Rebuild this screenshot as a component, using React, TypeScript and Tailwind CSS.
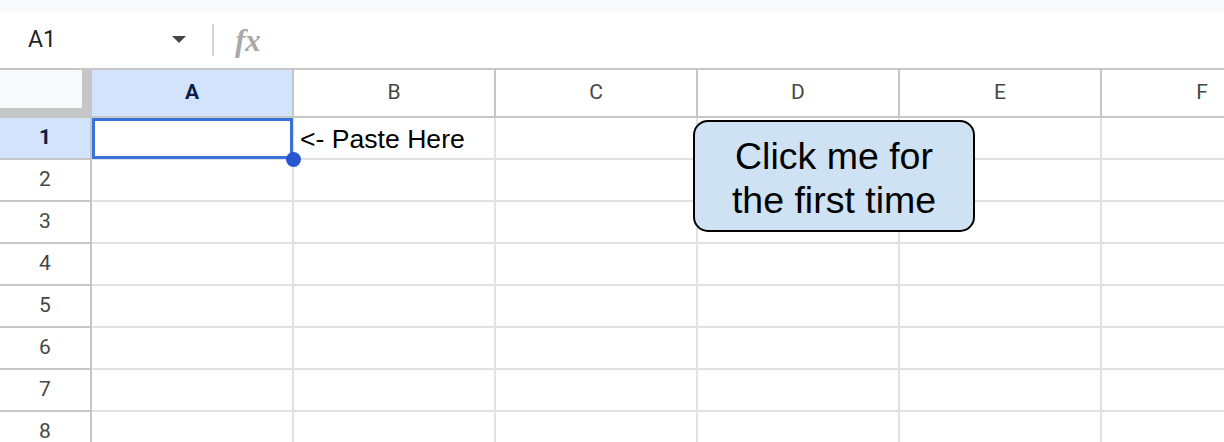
import React from "react";

const columns = ["A", "B", "C", "D", "E", "F"];
const rows = [1, 2, 3, 4, 5, 6, 7, 8];

function ColumnHeader({ label }: { label: string }) {
	const active = label === "A";
	return (
		<div
			className={`w-[202px] shrink-0 h-full border-r-2 border-b-2 border-[#c4c7c5] flex items-center justify-center text-[21px] ${
				active ? "bg-[#d3e3fd] text-[#0b1d45] font-bold" : "bg-white text-[#444746]"
			}`}
		>
			{label}
		</div>
	);
}

function Row({ n }: { n: number }) {
	const active = n === 1;
	return (
		<div className="flex h-[42px] shrink-0">
			<div
				className={`w-[92px] shrink-0 h-full border-r-2 border-b-2 border-[#c4c7c5] flex items-center justify-center text-[21px] ${
					active ? "bg-[#d3e3fd] text-[#0b1d45] font-bold" : "bg-white text-[#444746]"
				}`}
			>
				{n}
			</div>
			{columns.map((c) => (
				<div
					key={c}
					className="relative w-[202px] shrink-0 h-full border-r-2 border-b-2 border-[#e1e1e1] flex items-center"
				>
					{active && c === "A" && (
						<>
							<div className="absolute left-0 top-0 w-[201px] h-[41px] border-[3px] border-[#3a72dc]"></div>
							<div className="absolute left-[194px] top-[34px] w-[15px] h-[15px] rounded-full bg-[#2757d0] z-10"></div>
						</>
					)}
					{active && c === "B" && (
						<span className="pl-[6px] pt-[3px] text-[26.6px] text-black font-['Liberation_Sans',Arial,sans-serif] whitespace-nowrap">
							&lt;- Paste Here
						</span>
					)}
				</div>
			))}
		</div>
	);
}

export default function App() {
	return (
		<div className="relative w-[1224px] h-[442px] overflow-hidden bg-white font-['Roboto',Arial,sans-serif]">
			<div className="h-[12px] bg-[#f8fafd]"></div>

			{/* formula bar */}
			<div className="h-[56px] flex items-center">
				<div className="w-[212px] flex items-center pl-[28px] pr-[26px] justify-between">
					<span className="text-[23px] text-[#1f1f1f]">A1</span>
					<svg width="14" height="8" viewBox="0 0 14 8">
						<polygon points="0,0 14,0 7,7" fill="#444746" />
					</svg>
				</div>
				<div className="w-[2px] h-[32px] bg-[#d4d4d4]"></div>
				<span className="ml-[21px] italic font-bold text-[31px] text-[#a9a9a9] font-['Liberation_Serif',serif] leading-none">
					fx
				</span>
			</div>

			{/* grid */}
			<div className="border-t-2 border-[#c4c7c5] flex flex-col">
				<div className="flex h-[48px] shrink-0">
					<div className="w-[92px] shrink-0 h-full bg-[#c4c7c5]">
						<div className="w-[82px] h-[38px] bg-[#f8f9fa]"></div>
					</div>
					{columns.map((c) => (
						<ColumnHeader key={c} label={c} />
					))}
				</div>
				{rows.map((n) => (
					<Row key={n} n={n} />
				))}
			</div>

			{/* drawing */}
			<div className="absolute left-[693px] top-[120px] w-[282px] h-[112px] pt-[3px] rounded-[15px] border-2 border-black bg-[#cfe2f3] flex items-center justify-center text-center text-[37.5px] leading-[44px] text-black font-['Liberation_Sans',Arial,sans-serif]">
				Click me for
				<br />
				the first time
			</div>
		</div>
	);
}
